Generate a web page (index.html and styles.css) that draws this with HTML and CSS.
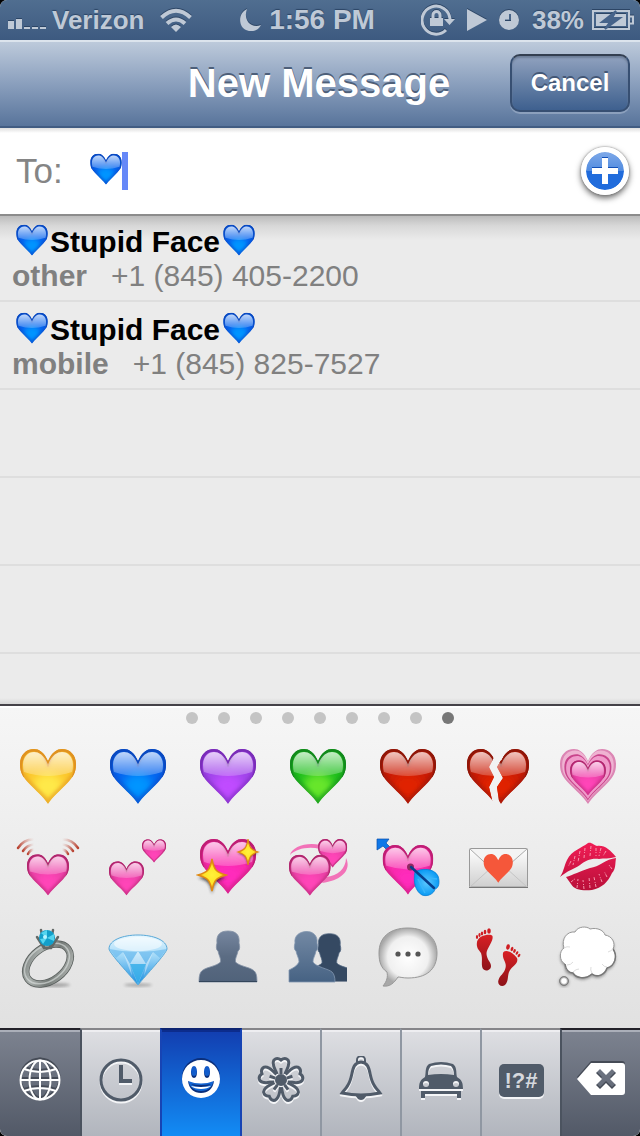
FILE: index.html
```html
<!DOCTYPE html>
<html lang="en">
<head>
<meta charset="utf-8">
<meta name="viewport" content="width=device-width, initial-scale=1">
<title>New Message</title>
<link rel="stylesheet" href="styles.css">
</head>
<body>
<svg class="defs" aria-hidden="true">
  <defs>
    <path id="heart-shape" d="M32 17C28 8 23 5 18 5C10 5 4 11 4 20C4 29 7 33 12 38.500C20 47 27 52 32 60C37 52 44 47 52 38.500C57 33 60 29 60 20C60 11 54 5 46 5C41 5 36 8 32 17Z"/>
    <clipPath id="heart-clip"><use href="#heart-shape"/></clipPath>
    <linearGradient id="gloss" x1="0" y1="0" x2="0" y2="1"><stop offset="0" stop-color="#fff" stop-opacity=".75"/><stop offset="1" stop-color="#fff" stop-opacity=".2"/></linearGradient>
    <filter id="soft" x="-50%" y="-50%" width="200%" height="200%"><feGaussianBlur stdDeviation="5"/></filter>
    <filter id="soft-sm" x="-50%" y="-50%" width="200%" height="200%"><feGaussianBlur stdDeviation="1.5"/></filter>
    <symbol id="heart" viewBox="0 0 64 64">
      <g clip-path="url(#heart-clip)">
        <use href="#heart-shape" fill="var(--body)"/>
        <ellipse cx="32" cy="42" rx="15" ry="13" fill="var(--glow)" filter="url(#soft)"/>
        <use href="#heart-shape" fill="none" stroke="var(--edge)" stroke-width="6" opacity=".5" filter="url(#soft-sm)"/>
        <path d="M4 28V0H60V28" fill="none"/>
        <path d="M6 34C2 25 2 5 18 5C23 5 28 8 32 17C36 8 41 5 46 5C62 5 62 25 58 34" fill="none" stroke="var(--edge)" stroke-width="5"/>
        <path d="M32 20.500C28 11 23 8 18 8C12 8 7 13 7 21Q7 26 8 28Q32 36 56 28Q57 26 57 21C57 13 52 8 46 8C41 8 36 11 32 20.500Z" fill="url(#gloss)"/>
      </g>
    </symbol>
    <linearGradient id="wave-l"><stop offset="0" stop-color="#b8402e"/><stop offset="1" stop-color="#d8a098" stop-opacity="0"/></linearGradient>
    <linearGradient id="wave-r"><stop offset="0" stop-color="#d8a098" stop-opacity="0"/><stop offset="1" stop-color="#b8402e"/></linearGradient>
    <radialGradient id="star"><stop offset="0" stop-color="#fff23a"/><stop offset=".55" stop-color="#ffe528"/><stop offset="1" stop-color="#e98a10"/></radialGradient>
    <linearGradient id="paper" x1="0" y1="0" x2="0" y2="1"><stop offset="0" stop-color="#fff"/><stop offset="1" stop-color="#cfcfcf"/></linearGradient>
    <linearGradient id="lips" x1="0" y1="0" x2="0" y2="1"><stop offset="0" stop-color="#f01d55"/><stop offset="1" stop-color="#b90f39"/></linearGradient>
    <linearGradient id="metal" x1="0" y1="0" x2="1" y2="1"><stop offset="0" stop-color="#757b79"/><stop offset=".3" stop-color="#a9afac"/><stop offset=".6" stop-color="#747a77"/><stop offset="1" stop-color="#b5b9b6"/></linearGradient>
    <linearGradient id="ice" x1="0" y1="0" x2="0" y2="1"><stop offset="0" stop-color="#e8f8ff"/><stop offset=".4" stop-color="#a5daf8"/><stop offset="1" stop-color="#168de0"/></linearGradient>
    <linearGradient id="bust" x1="0" y1="0" x2="0" y2="1"><stop offset="0" stop-color="#76869f"/><stop offset=".5" stop-color="#5b6c83"/><stop offset="1" stop-color="#50627a"/></linearGradient>
    <linearGradient id="bust-blue" x1="0" y1="0" x2="0" y2="1"><stop offset="0" stop-color="#7389a4"/><stop offset="1" stop-color="#466283"/></linearGradient>
    <radialGradient id="bubble"><stop offset="0" stop-color="#fff"/><stop offset=".7" stop-color="#f0f0f0"/><stop offset="1" stop-color="#a8a8a8"/></radialGradient>
    <linearGradient id="feet" x1="0" y1="0" x2="0" y2="1"><stop offset="0" stop-color="#d92024"/><stop offset="1" stop-color="#8d1218"/></linearGradient>
    <radialGradient id="feather"><stop offset="0" stop-color="#5cc9ff"/><stop offset="1" stop-color="#0a9af4"/></radialGradient>
    <radialGradient id="drop"><stop offset=".5" stop-color="#fff"/><stop offset="1" stop-color="#777"/></radialGradient>
    <path id="star-shape" d="M0-16C2-5 4-3 14 0C4 3 2 5 0 16C-2 5-4 3-14 0C-4-3-2-5 0-16Z"/>
    <path id="cloud-shape" d="M19 8C22 2 31 2 34 5C42 3 48 7 49 11C56 12 60 19 57 25C62 32 59 42 51 44C49 51 41 54 36 50C29 56 20 54 17 49C11 49 8 45 9 40C3 37 3 27 8 24C5 15 11 7 19 8Z"/>
    <path id="bust-shape" d="M32 7C40 7 44 11 43 19C44 22 44 26 42 27C41 32 39 34 39.500 38C43 42 53 43 57 46C60 48 61 51 61 58H3C3 51 4 48 7 46C11 43 21 42 24.500 38C25 34 23 32 22 27C20 26 20 22 21 19C20 11 24 7 32 7Z"/>
  </defs>
</svg>

<div class="screen">
  <header class="status">
    <div class="status-side">
      <svg class="signal" viewBox="0 0 38 10" aria-label="Signal strength"><path d="M0 2h6v8H0zM8 0h6v10H8zM16 8h6v2h-6zM24 8h6v2h-6zM32 8h6v2h-6z"/></svg>
      <span class="carrier">Verizon</span>
      <svg class="wifi" viewBox="0 0 32 24" aria-label="Wi-Fi"><path d="M16 24L11 19Q16 14 21 19Z"/><path class="line" d="M7 15.500Q16 7.500 25 15.500M1.500 9.500Q16-4 30.500 9.500"/></svg>
    </div>
    <div class="status-mid">
      <svg class="moon" viewBox="0 0 22 22" aria-label="Do not disturb"><path d="M7 0C-2 4-2 17 6 21C12 24 19 21 21 16C10 20 3 10 7 0Z"/></svg>
      <span class="clock">1:56 PM</span>
    </div>
    <div class="status-side status-right">
      <svg class="lock" viewBox="0 0 34 32" aria-label="Rotation lock"><path class="line thin" d="M25 26A14 14 0 1 1 29 15"/><path d="M23 15H34L28.500 21ZM9 14h13v8H9z"/><path class="line thin" d="M12 14V11a3.500 3.500 0 0 1 7 0V14"/></svg>
      <svg class="play" viewBox="0 0 20 22" aria-label="Playing"><path d="M0 0L20 11L0 22Z"/></svg>
      <svg class="alarm" viewBox="0 0 20 20" aria-label="Alarm"><path fill-rule="evenodd" d="M10 0a10 10 0 1 0 0 20a10 10 0 1 0 0-20ZM10 4h2v7H6V9.500H10Z"/></svg>
      <span class="carrier">38%</span>
      <svg class="battery" viewBox="0 0 42 22" aria-label="Charging"><path class="line cell" d="M1 2H37V20H1Z"/><path class="line cell" d="M37 7.500H41V14.500H37"/><path fill-rule="evenodd" d="M4 5H34V17H4ZM22 4L10 13H18L14 18L28 9H20L24 4Z"/><path class="bolt" d="M24 2L10 13H18L13 20L28 9H20Z"/></svg>
    </div>
  </header>

  <nav class="navbar">
    <h1>New Message</h1>
    <button class="cancel" type="button">Cancel</button>
  </nav>

  <form class="recipient">
    <label for="to">To:</label>
    <svg class="mini blue" aria-label="Blue heart"><use href="#heart"/></svg>
    <span class="caret"></span>
    <input id="to" type="text" autocomplete="off">
    <button class="add" type="button" aria-label="Add contact"><svg viewBox="0 0 26 26"><path d="M10 0h6v10h10v6H16v10h-6V16H0v-6h10z"/></svg></button>
  </form>

  <ul class="results">
    <li>
      <div class="name"><svg class="mini blue"><use href="#heart"/></svg><span>Stupid Face</span><svg class="mini blue"><use href="#heart"/></svg></div>
      <div class="phone"><b>other</b><span>+1 (845) 405-2200</span></div>
    </li>
    <li>
      <div class="name"><svg class="mini blue"><use href="#heart"/></svg><span>Stupid Face</span><svg class="mini blue"><use href="#heart"/></svg></div>
      <div class="phone"><b>mobile</b><span>+1 (845) 825-7527</span></div>
    </li>
    <li></li><li></li><li></li>
  </ul>

  <section class="keyboard">
    <div class="pager"><i></i><i></i><i></i><i></i><i></i><i></i><i></i><i></i><i class="on"></i></div>
    <div class="emoji">
      <button type="button" aria-label="Yellow heart"><svg class="yellow"><use href="#heart"/></svg></button>
      <button type="button" aria-label="Blue heart"><svg class="blue"><use href="#heart"/></svg></button>
      <button type="button" aria-label="Purple heart"><svg class="purple"><use href="#heart"/></svg></button>
      <button type="button" aria-label="Green heart"><svg class="green"><use href="#heart"/></svg></button>
      <button type="button" aria-label="Red heart"><svg class="red"><use href="#heart"/></svg></button>
      <button type="button" aria-label="Broken heart"><svg class="red" viewBox="0 0 64 64">
        <clipPath id="break-l"><path d="M-4-4H27L31 13L26 23L31 33L26 43L31 64H-4Z"/></clipPath>
        <clipPath id="break-r"><path d="M70-4H38L34 13L28 23L34 34L28 43L31 64H70Z"/></clipPath>
        <g transform="translate(-3 0)"><g clip-path="url(#break-l)"><use href="#heart" width="64" height="64"/></g></g>
        <g transform="translate(3 0)"><g clip-path="url(#break-r)"><use href="#heart" width="64" height="64"/></g></g>
      </svg></button>
      <button type="button" aria-label="Growing heart"><svg class="pink" viewBox="0 0 64 64">
        <use href="#heart-shape" fill="#dc86b4"/>
        <use href="#heart-shape" fill="#efb3d2" transform="translate(2.500 2) scale(.92)"/>
        <use href="#heart-shape" fill="#c9458c" transform="translate(5 6) scale(.84)"/>
        <use href="#heart-shape" fill="#f09aca" transform="translate(7 8) scale(.78)"/>
        <use href="#heart" width="64" height="64" transform="translate(11.500 13) scale(.64)"/>
      </svg></button>

      <button type="button" aria-label="Beating heart"><svg class="pink" viewBox="0 0 64 64">
        <g fill="none" stroke="url(#wave-l)" stroke-width="2.500" stroke-linecap="round"><path d="M2 14Q8 5 18 5.500"/><path d="M7 17Q11 11 18 10.500"/><path d="M12 20Q14 16 18 15.500"/></g>
        <g fill="none" stroke="url(#wave-r)" stroke-width="2.500" stroke-linecap="round"><path d="M62 14Q56 5 46 5.500"/><path d="M57 17Q53 11 46 10.500"/><path d="M52 20Q50 16 46 15.500"/></g>
        <use href="#heart" width="64" height="64" transform="translate(8 16.500) scale(.75)"/>
      </svg></button>
      <button type="button" aria-label="Two hearts"><svg class="pink" viewBox="0 0 64 64">
        <use href="#heart" width="64" height="64" transform="translate(.5 24) scale(.625)"/>
        <use href="#heart" width="64" height="64" transform="translate(34.300 3) scale(.43)"/>
      </svg></button>
      <button type="button" aria-label="Sparkling heart"><svg class="hot" viewBox="0 0 64 64">
        <use href="#heart" width="64" height="64"/>
        <use href="#star-shape" transform="translate(16 44)" fill="#222" opacity=".7" filter="url(#soft-sm)"/>
        <use href="#star-shape" transform="translate(16 41)" fill="url(#star)" stroke="#e08a12" stroke-width="1.500"/>
        <use href="#star-shape" transform="translate(52 19) scale(.72 .8)" fill="#222" opacity=".7" filter="url(#soft-sm)"/>
        <use href="#star-shape" transform="translate(52 18) scale(.72 .8)" fill="url(#star)" stroke="#e08a12" stroke-width="1.500"/>
      </svg></button>
      <button type="button" aria-label="Revolving hearts"><svg class="pink" viewBox="0 0 64 64">
        <path d="M4 21C6 13 20 8 34 11V15C22 12 10 15 4 21ZM60 24C65 34 59 46 36 49L40 43C52 42 60 34 60 24Z" fill="#f272b8"/>
        <use href="#heart" width="64" height="64" transform="translate(30 2.500) scale(.52)"/>
        <use href="#heart" width="64" height="64" transform="translate(0 17) scale(.745)"/>
      </svg></button>
      <button type="button" aria-label="Heart with arrow"><svg class="hot" viewBox="0 0 64 64">
        <path d="M1 5H13L10 9L16 15L13 18L7 12L1 16Z" fill="#0f78e8" stroke="#084fac" stroke-width=".7"/>
        <use href="#heart" width="64" height="64" transform="translate(3 6.500) scale(.905)"/>
        <circle cx="34.500" cy="33" r="3.500" fill="#8e2860"/>
        <path d="M39 38C45 34 58 34 62 42C64 48 63 54 59 55C58 60 51 63 46 61C39 57 37 47 39 38Z" fill="url(#feather)" stroke="#087fd4" stroke-width=".8"/>
        <path d="M45 43L61 45M42 45L49 59" stroke="#38b6fb" stroke-width="1.500" fill="none"/>
        <path d="M35 33L58 54" stroke="#073e8c" stroke-width="2.500" stroke-linecap="round"/>
      </svg></button>
      <button type="button" aria-label="Love letter"><svg viewBox="0 0 64 64">
        <rect x="3.500" y="14.500" width="58" height="38.500" rx="1" fill="url(#paper)" stroke="#999"/>
        <path d="M4 53L25 34M61 53L40 34" stroke="#c4c4c4" fill="none"/><path d="M4 15L28 37Q32 41 36 37L61 15" stroke="#aaa" fill="#f4f4f4"/>
        <path d="M3 53.500H62" stroke="#777"/>
        <use href="#heart-shape" transform="translate(15.600 17.500) scale(.52)" fill="#f5573a"/>
      </svg></button>
      <button type="button" aria-label="Kiss mark"><svg viewBox="0 0 64 64">
        <path d="M4 43C8 37 8 32 11 26C16 16 26 14 32 9C36 8 37 11 41 12C49 11 54 16 60 23C53 25 48 24 43 25C35 24 29 27 24 31C18 35 11 37 4 43ZM10 43C17 41 24 37 34 34C43 33 50 25 60 24C59 30 60 35 56 39C52 48 46 54 36 56C27 57 18 56 15 50Z" fill="url(#lips)"/>
        <path d="M15 27L12 33M19 22L17 31M24 17L22 28M29 14L28 24M35 12L34 22M40 14L40 22M45 14L43 22M50 17L47 22M15 48L20 44M21 54L22 45M28 55L27 46M34 54L33 43M40 53L38 43M46 48L43 40M51 43L48 37M56 35L53 31" fill="none" stroke="#f8a6b9" stroke-width=".9" stroke-dasharray="3 1 1 2"/>
      </svg></button>

      <button type="button" aria-label="Ring"><svg viewBox="0 0 64 64">
        <ellipse cx="34" cy="61" rx="20" ry="2" fill="#000" opacity=".3" filter="url(#soft-sm)"/>
        <ellipse cx="32" cy="40" rx="25" ry="16.500" transform="rotate(-37 32 40)" fill="none" stroke="#565c5a" stroke-width="7.500"/>
        <ellipse cx="32" cy="40" rx="25" ry="16.500" transform="rotate(-37 32 40)" fill="none" stroke="url(#metal)" stroke-width="6"/>
        <ellipse cx="31" cy="39.500" rx="25" ry="17" transform="rotate(-37 31 39.500)" fill="none" stroke="#e0e4e2" stroke-width="1.500" opacity=".6"/>
        <path d="M21 13L28 24H35L42 13M25 6L28 22M37 6L34 22" fill="none" stroke="#636967" stroke-width="2.500" stroke-linecap="round"/>
        <circle cx="31" cy="14" r="8" fill="#129fca"/><path d="M31 14L25 9L31 6ZM31 14L38 10L38 17ZM31 14L27 20L24 15Z" fill="#55d5ef"/><circle cx="29" cy="13" r="2" fill="#b6f4ff"/>
      </svg></button>
      <button type="button" aria-label="Gem"><svg viewBox="0 0 64 64">
        <ellipse cx="32" cy="61" rx="14" ry="1.500" fill="#000" opacity=".3" filter="url(#soft-sm)"/>
        <path d="M3 25C3 16 17 11 32 11S61 16 61 25C60 30 40 51 32 61C24 51 4 30 3 25Z" fill="url(#ice)" stroke="#58a8d8" stroke-width="1"/>
        <path d="M3 25Q32 31 61 25L54 34L47 28L40 40L32 27L24 40L17 28L10 34Z" fill="#69b9ec" opacity=".65"/>
        <path d="M17 28L26 52L24 40L32 61L40 40L38 52L47 28L40 40L32 27L24 40Z" fill="#fff" opacity=".4"/>
        <path d="M24 40H40L32 60Z" fill="#079ce5" opacity=".6"/>
        <ellipse cx="32" cy="20" rx="24" ry="7" fill="#fff" opacity=".55"/>
      </svg></button>
      <button type="button" aria-label="Bust in silhouette"><svg viewBox="0 0 64 64">
        <use href="#bust-shape" fill="url(#bust)" stroke="#8492a6" stroke-width=".8"/><path d="M3 57.500H61" stroke="#34465b" stroke-width="1"/>
      </svg></button>
      <button type="button" aria-label="Busts in silhouette"><svg viewBox="0 0 64 64">
        <clipPath id="bust-cut"><path d="M0 0H61V57.500H0Z"/></clipPath>
        <g clip-path="url(#bust-cut)"><use href="#bust-shape" transform="translate(12 3) scale(.98 .95)" fill="#354962" stroke="#536a84" stroke-width=".8"/></g>
        <path d="M20 7.500C27 7 32 12 31 19C32 22 32 26 30 27C29 32 27 34 27 38C30 43 43 45 46 48C48 50 49 53 49 58H3V46C7 44 11 42 13 38C13 34 11 32 10 27C8 26 8 22 9 19C8 12 13 8 20 7.500Z" fill="url(#bust-blue)" stroke="#8397b0" stroke-width=".8"/>
      </svg></button>
      <button type="button" aria-label="Speech balloon"><svg viewBox="0 0 64 64">
        <path d="M32 4C50 4 61 14 61 29C61 46 50 54 32 54C27 54 24 53 22 53C18 59 14 63 7 62C11 57 12 53 11 48C5 44 3 38 3 29C3 13 14 4 32 4Z" fill="url(#bubble)" stroke="#999" stroke-width="1"/>
        <g fill="#555"><circle cx="22" cy="30" r="2.600"/><circle cx="32" cy="30" r="2.600"/><circle cx="42" cy="30" r="2.600"/></g>
      </svg></button>
      <button type="button" aria-label="Footprints"><svg viewBox="0 0 64 64"><g fill="url(#feet)">
        <path d="M11 18C12 11 25 9 26.500 12C28 17 20 25 20.500 30C21 36 25 38 25 42C25 47 18 48 16.500 44C15 39 17 35 15 29C13 26 10 24 11 18Z"/>
        <path d="M37 29C38 25 46 27 51 34C53 40 46 42 43.500 47C41 52 43 57 39 61C35 64 31 60 32.500 56C34 51 38 50 39.500 44C41 38 36 36 37 29Z"/>
      </g><g fill="#cf1d22">
        <ellipse cx="23" cy="7" rx="1.800" ry="2.800"/><ellipse cx="19" cy="8" rx="1.300" ry="2.200"/><ellipse cx="16" cy="9.500" rx="1.200" ry="2"/><ellipse cx="13.500" cy="11" rx="1.100" ry="2"/><ellipse cx="11" cy="13" rx="1.100" ry="1.900"/>
        <ellipse cx="42" cy="23" rx="1.800" ry="2.800" transform="rotate(12 42 23)"/><ellipse cx="46" cy="25" rx="1.300" ry="2.200" transform="rotate(20 46 25)"/><ellipse cx="48.500" cy="27" rx="1.200" ry="2" transform="rotate(25 48.500 27)"/><ellipse cx="51" cy="29" rx="1.100" ry="2" transform="rotate(30 51 29)"/><ellipse cx="53" cy="31.500" rx="1.100" ry="1.900" transform="rotate(35 53 31.500)"/>
      </g></svg></button>
      <button type="button" aria-label="Thought balloon"><svg viewBox="0 0 64 64">
        <use href="#cloud-shape" transform="translate(0 2)" fill="#555" opacity=".6" filter="url(#soft-sm)"/>
        <use href="#cloud-shape" fill="#fff" stroke="#999" stroke-width="1"/>
        <path d="M9 40C10 46 13 49 17 49C20 54 29 56 36 50C41 54 49 51 51 44C59 42 62 32 57 25" fill="none" stroke="#777" stroke-width="1.500"/>
        <path d="M11 41Q15 41 17 38M17 48Q20 45 23 45M36 49Q34 46 35 43M51 43Q48 43 46 40M57 25Q55 27 52 28M8 24Q11 22 14 23" fill="none" stroke="#ddd"/>
        <circle cx="8" cy="58" r="5" fill="#555" opacity=".5" filter="url(#soft-sm)"/><circle cx="8" cy="57" r="4.500" fill="url(#drop)" stroke="#777" stroke-width=".8"/>
      </svg></button>
    </div>

    <div class="keys">
      <button class="dark" type="button" aria-label="Next keyboard"><svg viewBox="0 0 48 48"><g class="stroke"><circle cx="24" cy="24" r="19.500"/><ellipse cx="24" cy="24" rx="10.500" ry="19.500"/><path d="M24 4V44M4 24H44M8 13Q24 19 40 13M8 35Q24 29 40 35"/></g></svg></button>
      <button class="after-dark" type="button" aria-label="Recent"><svg viewBox="0 0 48 48"><circle class="stroke mid" cx="24" cy="24" r="20"/><path d="M22 9h4v14h9v4H22z"/></svg></button>
      <button class="selected" type="button" aria-label="People"><svg viewBox="0 0 48 48"><path fill-rule="evenodd" d="M24 4a19 19 0 1 0 0 38a19 19 0 1 0 0-38ZM17 10C21 10 21 22 17 22S13 10 17 10ZM30 10C34 10 34 22 30 22S26 10 30 10ZM11 25Q24 30 37 25C36 33 31 37 24 37S12 33 11 25ZM14 30C18 34 30 34 34 30Q24 32 14 30Z"/></svg></button>
      <button type="button" aria-label="Nature"><svg viewBox="0 0 48 48"><defs><path id="petal" d="M20 18C19 14 14 9 17 4Q20 1 24 4Q28 1 31 4C34 9 29 14 28 18M24 18V12"/></defs><g class="stroke mid"><use href="#petal"/><use href="#petal" transform="rotate(72 24 24)"/><use href="#petal" transform="rotate(144 24 24)"/><use href="#petal" transform="rotate(216 24 24)"/><use href="#petal" transform="rotate(288 24 24)"/></g><circle cx="24" cy="24" r="6"/></svg></button>
      <button type="button" aria-label="Objects"><svg viewBox="0 0 48 48"><path class="stroke mid" d="M24 6C13 7 17 20 11 29C9 33 7 34 5 37Q24 41 43 37C41 34 39 33 37 29C31 20 35 7 24 6Z"/><path class="stroke" d="M20 6V4a4 4 0 0 1 8 0V6"/><path d="M18 39H30L27 43Q24 45 21 43Z"/></svg></button>
      <button type="button" aria-label="Places"><svg viewBox="0 0 48 48"><path fill-rule="evenodd" d="M8 21C9 16 8 11 12 8Q24 4 36 8C40 11 39 16 40 21C45 24 46 27 46 33H2C2 27 3 24 8 21ZM11 19Q24 17 37 19C37 15 36 12 34 10Q24 7 14 10C12 12 11 15 11 19ZM9 25a3 3 0 1 0 0 6a3 3 0 1 0 0-6ZM39 25a3 3 0 1 0 0 6a3 3 0 1 0 0-6ZM4 35H44V42H40V38H8V42H4Z"/></svg></button>
      <button type="button" aria-label="Symbols"><span class="symbols">!?#</span></button>
      <button class="dark" type="button" aria-label="Delete"><svg viewBox="0 0 48 48"><path fill-rule="evenodd" d="M0 23L14 7H45Q48 7 48 10V36Q48 39 45 39H14ZM19 17L25 23L19 29L23 33L29 27L35 33L39 29L33 23L39 17L35 13L29 19L23 13Z"/></svg></button>
    </div>
  </section>
</div>
</body>
</html>
```
FILE: styles.css
```css
* {
  box-sizing: border-box;
}

body {
  margin: 0;
  background: #000;
  font-family: "Liberation Sans", Arial, sans-serif;
}

button {
  border: 0;
  padding: 0;
  background: none;
  font: inherit;
}

ul {
  list-style: none;
  margin: 0;
  padding: 0;
}

svg {
  display: block;
  flex: none;
}

.defs {
  position: absolute;
  width: 0;
  height: 0;
}

.screen {
  display: flex;
  flex-direction: column;
  min-height: 100vh;
  border-radius: 7px;
  overflow: hidden;
  background: #ebebeb;
}

/* Status bar */
.status {
  display: flex;
  align-items: center;
  height: 40px;
  padding: 0 6px 0 8px;
  background: linear-gradient(#506e90, #3d5a80);
  color: #bfc9d6;
  fill: #bfc9d6;
  font-size: 26px;
  font-weight: bold;
  line-height: 40px;
  text-shadow: 0 -1px 1px #2c4565;
}

.status svg {
  filter: drop-shadow(0 -1px 0 #2c4565);
}

.status-side,
.status-mid {
  display: flex;
  align-items: center;
}

.status-side {
  flex: 1;
}

.status-mid {
  margin-right: 32px;
}

.status-right {
  flex: none;
  justify-content: flex-end;
}

.status .line {
  fill: none;
  stroke: #bfc9d6;
  stroke-width: 4;
}

.status .thin {
  stroke-width: 3;
}

.status .cell {
  stroke-width: 2;
}

.status .bolt {
  stroke: #46638a;
  stroke-width: 2;
  paint-order: stroke;
  fill: #46638a;
}

.signal {
  width: 38px;
  height: 10px;
  margin: 8px 6px 0 0;
}

.wifi {
  width: 32px;
  height: 24px;
  margin-left: 16px;
}

.moon {
  width: 22px;
  height: 22px;
  margin-right: 7px;
}

.clock {
  font-size: 28px;
}

.status-mid {
  margin-right: 46px;
}

.lock {
  width: 34px;
  height: 32px;
  margin-right: 12px;
}

.play {
  width: 20px;
  height: 22px;
  margin-right: 12px;
}

.alarm {
  width: 20px;
  height: 20px;
  margin-right: 13px;
}

.battery {
  width: 42px;
  height: 22px;
  margin-left: 8px;
}

/* Navigation bar */
.navbar {
  display: grid;
  grid-template-columns: 118px 1fr 120px;
  align-items: center;
  height: 88px;
  padding: 0 10px 2px;
  border-top: 2px solid #dce4ed;
  border-bottom: 2px solid #415c82;
  background: linear-gradient(#bdcadb, #8a9fbd 50%, #58749b);
  color: #fff;
}

.navbar h1 {
  grid-column: 2;
  margin: 0;
  font-size: 40px;
  line-height: 48px;
  text-align: center;
  white-space: nowrap;
  text-shadow: 0 -2px 0 #4d5f79;
}

.cancel {
  height: 58px;
  border: 2px solid #374f72;
  border-top-color: #333f51;
  border-radius: 10px;
  background: linear-gradient(#91a2bf, #6680a5 50%, #3e608f);
  box-shadow: 0 2px 0 #8ca0bd, inset 0 2px 2px #6d7e98;
  color: #fff;
  font-size: 24px;
  font-weight: bold;
  text-shadow: 0 -2px 0 #435776;
}

/* Recipient field */
.recipient {
  display: flex;
  align-items: center;
  height: 86px;
  padding: 0 11px 0 16px;
  background: linear-gradient(#dedede, #fff 5px);
}

.recipient label {
  width: 72px;
  color: #858585;
  font-size: 35px;
}

.mini {
  width: 36px;
  height: 36px;
}

.recipient .mini {
  margin: 0 -2px 4px 0;
}

.caret {
  width: 6px;
  height: 38px;
  background: #6688f8;
}

.recipient input {
  flex: 1;
  min-width: 0;
  border: 0;
  outline: 0;
  padding: 0;
  background: none;
  font: inherit;
  font-size: 35px;
}

.add {
  display: grid;
  place-items: center;
  width: 48px;
  height: 48px;
  border: 5px solid #fff;
  border-radius: 50%;
  background: linear-gradient(#7fa9e8, #508be0 50%, #216cdc 50%);
  background-clip: padding-box;
  box-shadow: 0 3px 6px #666, 0 0 2px #777;
}

.add svg {
  width: 26px;
  height: 26px;
  fill: #fff;
  filter: drop-shadow(0 -1px 0 #1250b8);
}

/* Matching contacts */
.results {
  flex: 1;
  background: linear-gradient(#8c8c8c 2px, #bcbcbc 2px, #d8d8d8 12px, #ebebeb 26px, #ebebeb calc(100% - 6px), #d6d6d6);
}

.results li {
  height: 88px;
  padding: 8px 12px 0;
  border-bottom: 2px solid #dedede;
}

.name,
.phone {
  display: flex;
  align-items: center;
  height: 36px;
  font-size: 30px;
  white-space: nowrap;
}

.name {
  padding-left: 2px;
  font-weight: bold;
}

.name span {
  padding: 4px 1px 0 0;
}

.phone {
  gap: 24px;
  color: #808080;
}

/* Emoji keyboard */
.keyboard {
  border-top: 2px solid #454248;
  background: linear-gradient(#fff 2px, #f6f6f6 2px, #e1e1e1 324px);
}

.pager {
  display: flex;
  justify-content: center;
  gap: 20px;
  padding: 6px 0 20px;
}

.pager i {
  width: 12px;
  height: 12px;
  border-radius: 50%;
  background: #c4c4c4;
}

.pager .on {
  background: #777;
}

.emoji {
  display: grid;
  grid-template-columns: repeat(7, 1fr);
  justify-items: center;
  row-gap: 26px;
  padding: 0 7px 40px 3px;
}

.emoji svg {
  width: 64px;
  height: 64px;
}

.yellow { --body: #fbc62c; --glow: #ffe94a; --edge: #e09220; }
.blue { --body: #0562ee; --glow: #0094ff; --edge: #0a49c0; }
.purple { --body: #a044ea; --glow: #c04cff; --edge: #7a2cb8; }
.green { --body: #1dbd1d; --glow: #68e62c; --edge: #128a1c; }
.red { --body: #c91c05; --glow: #e02400; --edge: #8f1608; }
.pink { --body: #ec42a8; --glow: #ff45b8; --edge: #b0286e; }
.hot { --body: #f82bab; --glow: #ff2cbc; --edge: #bf1e74; }

.keys {
  display: grid;
  grid-template-columns: repeat(8, 1fr);
  height: 108px;
}

.keys button {
  display: grid;
  place-items: center;
  padding-bottom: 6px;
  border-top: 2px solid #858589;
  border-left: 2px solid #8f97a2;
  background: linear-gradient(#eeeef1 2px, #dddee2 2px, #b1b5bd);
  color: #505b69;
}

.keys svg {
  width: 48px;
  height: 48px;
  fill: currentColor;
  filter: drop-shadow(0 2px 0 #f4f5f7);
}

.keys .stroke {
  fill: none;
  stroke: currentColor;
  stroke-width: 2;
}

.keys .mid {
  stroke-width: 3;
}

.keys .dark,
.keys .selected {
  color: #fff;
}

.keys .dark {
  border-top-color: #222129;
  border-left-color: #4b535f;
  background: linear-gradient(#abafb9 2px, #7c828f 2px, #525967);
}

.keys .dark:first-child {
  border-left: 0;
}

.keys .after-dark {
  border-left-color: #4b535f;
}

.keys .dark svg {
  filter: drop-shadow(0 -2px 0 #454b56);
}

.keys .selected {
  z-index: 1;
  margin-right: -2px;
  border: 2px solid #1744b4;
  border-top-color: #0d2470;
  border-bottom: 0;
  background: linear-gradient(#0c2c8c 2px, #123fb1 2px, #128cf5);
}

.keys .selected svg {
  filter: drop-shadow(0 -2px 0 #0a2f7c);
}

.symbols {
  padding: 0 6px;
  border-radius: 5px;
  background: #505b69;
  box-shadow: 0 2px 0 #f4f5f7;
  color: #d5d8dd;
  font-size: 22px;
  font-weight: bold;
  line-height: 33px;
}
```
